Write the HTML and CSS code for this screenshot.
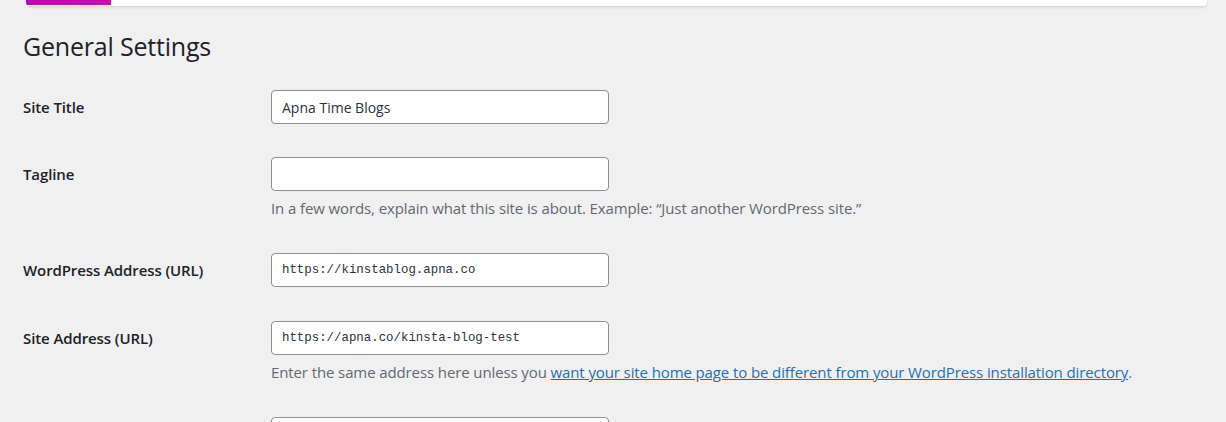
FILE: index.html
```html
<!DOCTYPE html>
<html lang="en">

<head>
    <meta charset="UTF-8">
    <meta name="viewport" content="width=device-width, initial-scale=1.0">
    <title>General Settings</title>

    <link rel="stylesheet" href="styles.css">
</head>

<body>

    <div class="top-strip">
        <div class="top-strip-accent"></div>
    </div>

    <div class="wrap">
        <h1>General Settings</h1>

        <form class="settings-form">

            <div class="form-row">
                <label for="blogname">Site Title</label>
                <div class="field">
                    <input type="text" id="blogname" value="Apna Time Blogs">
                </div>
            </div>

            <div class="form-row">
                <label for="blogdescription">Tagline</label>
                <div class="field">
                    <input type="text" id="blogdescription" value="">
                    <p class="description">In a few words, explain what this site is about. Example: “Just another WordPress site.”</p>
                </div>
            </div>

            <div class="form-row form-row-url">
                <label for="siteurl">WordPress Address (URL)</label>
                <div class="field">
                    <input type="url" id="siteurl" class="code" value="https://kinstablog.apna.co">
                </div>
            </div>

            <div class="form-row">
                <label for="home">Site Address (URL)</label>
                <div class="field">
                    <input type="url" id="home" class="code" value="https://apna.co/kinsta-blog-test">
                    <p class="description">Enter the same address here unless you <a href="#">want your site home page to be different from your WordPress installation directory</a>.</p>
                </div>
            </div>

            <!-- next row starts below the fold -->
            <div class="form-row">
                <label for="new_admin_email"></label>
                <div class="field">
                    <input type="email" id="new_admin_email" value="">
                </div>
            </div>

        </form>
    </div>

</body>

</html>
```

FILE: styles.css
```css
* {
    margin: 0;
    padding: 0;
    box-sizing: border-box;
}

body {
    font-family: "Open Sans", "Noto Sans", sans-serif;
    background-color: #f0f0f1;
    color: #1d2327;
    height: 422px;
    overflow: hidden;
}

.top-strip {
    height: 6px;
    margin: 0 19px 0 26px;
    background-color: #fff;
    border-radius: 0 0 4px 4px;
    box-shadow: 0 1px 3px rgba(0, 0, 0, 0.15);
    overflow: hidden;
}

.top-strip-accent {
    width: 85px;
    height: 5px;
    background: linear-gradient(90deg, #b00cb3, #c212ae);
}

.wrap {
    padding-left: 23px;
}

.wrap h1 {
    font-size: 25px;
    font-weight: 400;
    letter-spacing: -0.2px;
    line-height: 34px;
    margin-top: 23px;
}

.settings-form {
    margin-top: 27px;
}

.form-row {
    display: grid;
    grid-template-columns: 248px 1fr;
    margin-bottom: 33px;
}

.form-row-url {
    margin-bottom: 34px;
}

.form-row label {
    font-size: 15px;
    font-weight: 600;
    line-height: 34px;
    letter-spacing: -0.1px;
}

.field input {
    display: block;
    width: 338px;
    height: 34px;
    padding: 0 10px;
    border: 1px solid #8c8f94;
    border-radius: 4px;
    background-color: #fff;
    color: #2c3338;
    font-family: "Open Sans", "Noto Sans", sans-serif;
    font-size: 14px;
}

.field input.code {
    font-family: "Liberation Mono", monospace;
    font-size: 12.4px;
}

.description {
    margin-top: 5px;
    font-size: 15px;
    line-height: 24px;
    letter-spacing: -0.11px;
    color: #646970;
}

.description a {
    color: #2271b1;
}
```
